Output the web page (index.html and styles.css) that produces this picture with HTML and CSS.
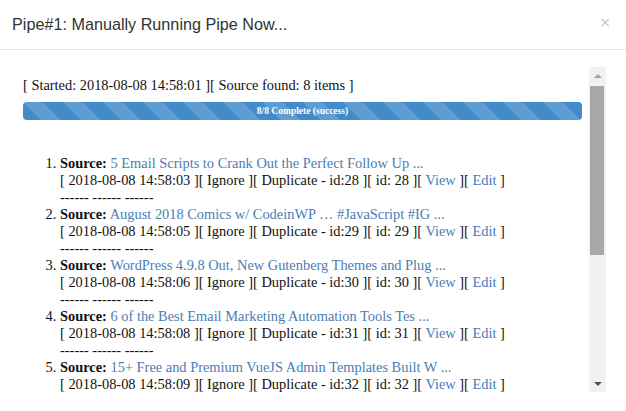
FILE: index.html
```html
<!DOCTYPE html>
<html>
<head>
<meta charset="utf-8">
<link rel="stylesheet" href="styles.css">
</head>
<body>
<div class="modal">
  <div class="modal-header">
    <h4 class="modal-title">Pipe#1: Manually Running Pipe Now...</h4>
    <span class="close">×</span>
  </div>
  <div class="modal-body">
    <div class="scroll-area">
      <div class="log">
        <div class="started">[ Started: 2018-08-08 14:58:01 ][ Source found: 8 items ]</div>
        <div class="progress"><div class="progress-bar">8/8 Complete (success)</div></div>
        <ol class="items">
          <li><b>Source:</b> <a href="#">5 Email Scripts to Crank Out the Perfect Follow Up ...</a><br>[ 2018-08-08 14:58:03 ][ Ignore ][ Duplicate - id:28 ][ id: 28 ][ <a href="#">View</a> ][ <a href="#">Edit</a> ]<br>------ ------ ------</li>
          <li><b>Source:</b> <a href="#">August 2018 Comics w/ CodeinWP … #JavaScript #IG ...</a><br>[ 2018-08-08 14:58:05 ][ Ignore ][ Duplicate - id:29 ][ id: 29 ][ <a href="#">View</a> ][ <a href="#">Edit</a> ]<br>------ ------ ------</li>
          <li><b>Source:</b> <a href="#">WordPress 4.9.8 Out, New Gutenberg Themes and Plug ...</a><br>[ 2018-08-08 14:58:06 ][ Ignore ][ Duplicate - id:30 ][ id: 30 ][ <a href="#">View</a> ][ <a href="#">Edit</a> ]<br>------ ------ ------</li>
          <li><b>Source:</b> <a href="#">6 of the Best Email Marketing Automation Tools Tes ...</a><br>[ 2018-08-08 14:58:08 ][ Ignore ][ Duplicate - id:31 ][ id: 31 ][ <a href="#">View</a> ][ <a href="#">Edit</a> ]<br>------ ------ ------</li>
          <li><b>Source:</b> <a href="#">15+ Free and Premium VueJS Admin Templates Built W ...</a><br>[ 2018-08-08 14:58:09 ][ Ignore ][ Duplicate - id:32 ][ id: 32 ][ <a href="#">View</a> ][ <a href="#">Edit</a> ]<br>------ ------ ------</li>
        </ol>
      </div>
      <div class="scrollbar">
        <div class="sb-btn up"><span class="tri-up"></span></div>
        <div class="sb-track"><div class="sb-thumb"></div></div>
        <div class="sb-btn down"><span class="tri-down"></span></div>
      </div>
    </div>
  </div>
</div>
</body>
</html>
```

FILE: styles.css
```css
html, body {
  margin: 0;
  padding: 0;
  background: #fff;
}
.modal {
  width: 626px;
  height: 411px;
  overflow: hidden;
  background: #fff;
}
.modal-header {
  display: flex;
  justify-content: space-between;
  align-items: center;
  height: 50px;
  box-sizing: border-box;
  padding: 0 15px 0 12px;
  border-bottom: 1px solid #e5e5e5;
}
.modal-title {
  margin: 0;
  font-family: "Liberation Sans", Arial, sans-serif;
  font-weight: normal;
  font-size: 16.2px;
  color: #333;
  line-height: 23px;
}
.close {
  font-family: "DejaVu Sans", "Liberation Sans", sans-serif;
  font-size: 14px;
  font-weight: normal;
  color: #c4c4c4;
  line-height: 1;
  margin-top: -5px;
}
.modal-body {
  padding: 17px 20px 18px 14px;
}
.scroll-area {
  display: flex;
  height: 325px;
  overflow: hidden;
}
.log {
  flex: 1;
  padding: 10px 7px 0 9px;
  overflow: hidden;
  font-family: "Liberation Serif", "Times New Roman", serif;
  font-size: 14.4px;
  line-height: 17px;
  color: #111;
  white-space: nowrap;
}
.started {
  margin-bottom: 8px;
}
.progress {
  height: 18px;
  border-radius: 4px;
  background: #f5f5f5;
  overflow: hidden;
}
.progress-bar {
  height: 100%;
  width: 100%;
  background-color: #428bca;
  background-image: linear-gradient(45deg, rgba(255,255,255,.15) 25%, transparent 25%, transparent 50%, rgba(255,255,255,.15) 50%, rgba(255,255,255,.15) 75%, transparent 75%, transparent);
  background-size: 40px 40px;
  color: #fff;
  font-size: 9.5px;
  font-weight: bold;
  line-height: 18px;
  text-align: center;
}
.items {
  margin: 35px 0 0 0;
  padding-left: 37px;
}
.items a {
  color: #4a7db4;
  text-decoration: none;
}
.scrollbar {
  width: 17px;
  display: flex;
  flex-direction: column;
  background: #f1f1f1;
}
.sb-btn {
  height: 17px;
  display: flex;
  align-items: center;
  justify-content: center;
}
.sb-track {
  flex: 1;
}
.sb-thumb {
  margin: 2px 2px 0 1px;
  height: 169px;
  background: #a8a8a8;
}
.tri-up {
  width: 0;
  height: 0;
  border-left: 4px solid transparent;
  border-right: 4px solid transparent;
  border-bottom: 4px solid #a3a3a3;
}
.tri-down {
  width: 0;
  height: 0;
  border-left: 4px solid transparent;
  border-right: 4px solid transparent;
  border-top: 4px solid #505050;
}
```
